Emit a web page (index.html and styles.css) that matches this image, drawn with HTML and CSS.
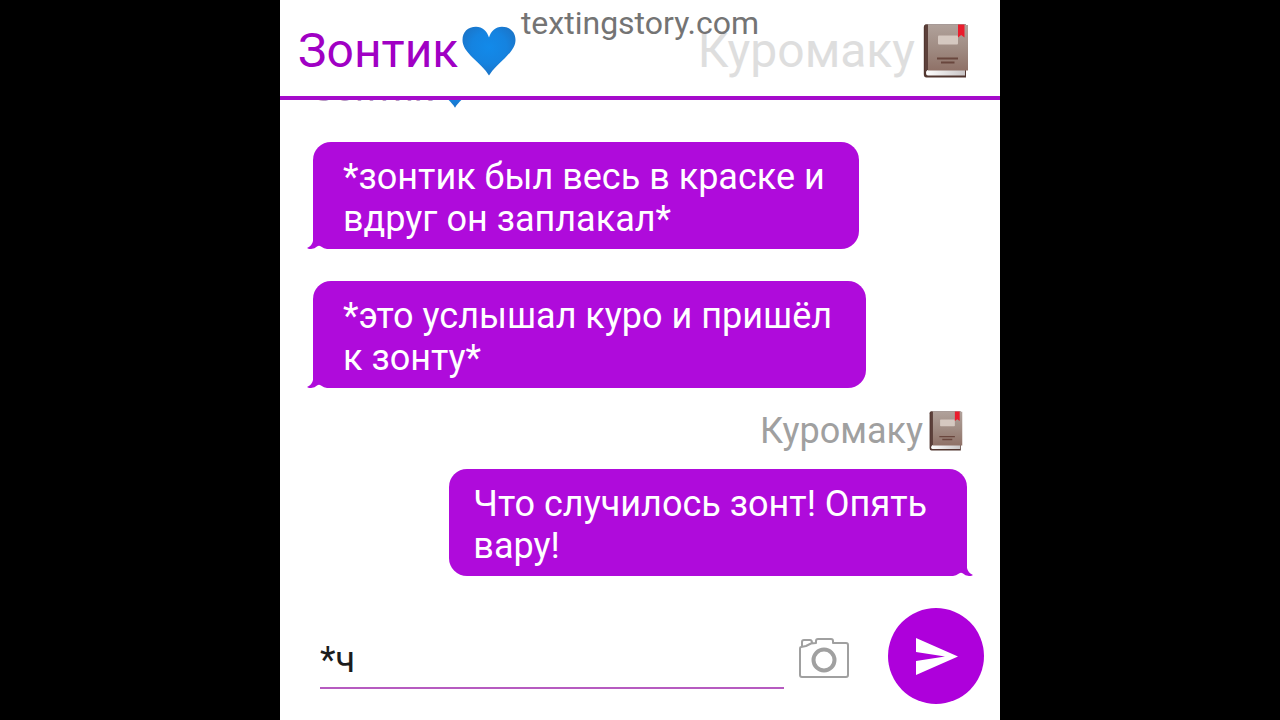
FILE: index.html
```html
<!DOCTYPE html>
<html lang="ru">
<head>
<meta charset="utf-8">
<title>TextingStory</title>
<link rel="stylesheet" href="styles.css">
</head>
<body>
<svg width="0" height="0" class="defs" aria-hidden="true">
  <defs>
    <radialGradient id="heartFill" cx="50%" cy="42%" r="60%">
      <stop offset="0" stop-color="#128aea"/>
      <stop offset="0.55" stop-color="#1583e0"/>
      <stop offset="1" stop-color="#1c72c4"/>
    </radialGradient>
    <linearGradient id="cover" x1="0" y1="0" x2="0" y2="1">
      <stop offset="0" stop-color="#b0a19a"/>
      <stop offset="0.5" stop-color="#a08c83"/>
      <stop offset="1" stop-color="#8f7167"/>
    </linearGradient>
    <linearGradient id="pages" x1="0" y1="0" x2="1" y2="0">
      <stop offset="0" stop-color="#ffffff"/>
      <stop offset="1" stop-color="#c9c5c6"/>
    </linearGradient>
    <symbol id="heart" viewBox="0 0 54 50">
      <path fill="url(#heartFill)" d="M27 49.500C23 43 17 38 11 32C4 25 .5 20 .5 14C.5 6 6 .8 14 .8C20.500 .8 25 5 27 11.500C29 5 33.500 .8 40 .8C48 .8 53.500 6 53.500 14C53.500 20 50 25 43 32C37 38 31 43 27 49.500Z"/>
    </symbol>
    <symbol id="book" viewBox="0 0 46 54">
      <path fill="#513630" d="M2.500 .5H43V53.500H3.500Q.8 53.500 .8 50V3Q.8 .5 2.500 .5Z"/>
      <path fill="url(#pages)" d="M5 46H42V51.500H5Q3 51.500 3 49Q3 46 5 46Z"/>
      <path fill="url(#cover)" d="M5 1H45V46.500H5Z"/>
      <path fill="#5c403a" d="M2.500 .5H5V45.500L2 48V3Z"/>
      <rect x="15" y="11.500" width="20" height="9" rx="1" fill="#d5c8c0"/>
      <path fill="#ea1c2c" d="M35 .5H41.500V13.500L38.200 11L35 13.500Z"/>
      <path stroke="#69463d" stroke-width="1.800" d="M14 34.500H35M18 38.500H31.500"/>
    </symbol>
    <symbol id="tail" viewBox="0 0 20 12">
      <path fill="#af0bdb" d="M6 0V4Q5 9 0 11L2 12H20V0Z"/>
      <path fill="#fff" d="M4 12Q8 11.500 10 9.500Q12 8 14 9.500Q17 11.500 20 12Z"/>
    </symbol>
  </defs>
</svg>
<div class="phone">
  <header class="header">
    <h1 class="person">Зонтик<svg class="heart"><use href="#heart"/></svg></h1>
    <p class="site">textingstory.com</p>
    <h2 class="person person-idle">Куромаку<svg class="book"><use href="#book"/></svg></h2>
  </header>
  <main class="chat">
    <p class="sender sender-left">Зонтик<svg class="heart heart-small"><use href="#heart"/></svg></p>
    <p class="bubble bubble-left">*зонтик был весь в краске и<br>вдруг он заплакал*<svg class="tail"><use href="#tail"/></svg></p>
    <p class="bubble bubble-left">*это услышал куро и пришёл<br>к зонту*<svg class="tail"><use href="#tail"/></svg></p>
    <p class="sender sender-right">Куромаку<svg class="book book-small"><use href="#book"/></svg></p>
    <p class="bubble bubble-right">Что случилось зонт! Опять<br>вару!<svg class="tail"><use href="#tail"/></svg></p>
  </main>
  <form class="composer">
    <input class="message" type="text" value="*ч" aria-label="Сообщение">
    <button class="camera" type="button" aria-label="Камера">
      <svg width="50" height="40" viewBox="0 0 50 40" fill="none" stroke="#a0a0a0" stroke-width="2" stroke-linejoin="round">
        <path d="M2 9Q1 9 1 11V37Q1 39 3 39H47Q49 39 49 37V7Q49 5 47 5H34V3Q34 1 32 1H19Q17 1 17 3V5L12 5.500L7 8L2 9ZM3 8V4Q3 2 5 2H11Q13 2 13 5"/>
        <circle cx="25" cy="22" r="10.500" stroke-width="4"/>
      </svg>
    </button>
    <button class="send" type="submit" aria-label="Отправить">
      <svg width="42" height="37" viewBox="0 0 42 37"><path fill="#fff" d="M0 0L42 18.500L0 37V23L29 18.500L0 14Z"/></svg>
    </button>
  </form>
</div>
</body>
</html>
```
FILE: styles.css
```css
* {
  box-sizing: border-box;
}

body {
  margin: 0;
  background: #000;
  font-family: Roboto, "Noto Sans", sans-serif;
}

h1, h2, p {
  margin: 0;
  font-weight: 400;
}

.defs {
  position: absolute;
}

.phone {
  display: flex;
  flex-direction: column;
  max-width: 720px;
  height: 100vh;
  margin: 0 auto;
  background: #fff;
}

.header {
  position: relative;
  display: flex;
  flex: none;
  align-items: center;
  justify-content: space-between;
  padding: 23px 31px 17px 18px;
  border-bottom: 4px solid #a50bcb;
}

.person {
  display: flex;
  align-items: center;
  gap: 4px;
  font-size: 48px;
  line-height: 56px;
  color: #a000c4;
}

.person-idle {
  gap: 8px;
  color: #dedede;
}

.site {
  position: absolute;
  top: 4px;
  left: 0;
  width: 100%;
  text-align: center;
  font-size: 32px;
  line-height: 38px;
  color: #747474;
}

.heart {
  width: 54px;
  height: 50px;
}

.heart-small {
  width: 40px;
  height: 37px;
}

.book {
  width: 46px;
  height: 54px;
}

.book-small {
  width: 34px;
  height: 40px;
}

.chat {
  display: flex;
  flex: 1;
  flex-direction: column;
  justify-content: flex-end;
  min-height: 0;
  overflow: hidden;
  padding: 0 33px 16px;
}

.sender {
  display: flex;
  align-items: center;
  font-size: 36px;
  line-height: 42px;
}

.sender-left {
  gap: 2px;
  margin-bottom: 32px;
  color: #b99cc4;
}

.sender-right {
  gap: 6px;
  align-self: flex-end;
  margin: -10px 4px 17px 0;
  color: #a0a0a0;
}

.bubble {
  position: relative;
  padding: 14px 34px 9px 30px;
  border-radius: 18px;
  background: #af0bdb;
  font-size: 36px;
  line-height: 42px;
  color: #fff;
}

.bubble-left {
  align-self: flex-start;
  margin-bottom: 32px;
  border-bottom-left-radius: 0;
}

.bubble-right {
  align-self: flex-end;
  padding: 14px 40px 9px 24px;
  border-bottom-right-radius: 0;
}

.tail {
  position: absolute;
  bottom: 0;
  left: -6px;
  width: 20px;
  height: 12px;
}

.bubble-right .tail {
  right: -6px;
  left: auto;
  transform: scaleX(-1);
}

.composer {
  display: flex;
  flex: none;
  align-items: center;
  padding: 16px 16px 16px 40px;
}

.message {
  flex: 1;
  min-width: 0;
  height: 66px;
  padding: 10px 0 0;
  border: 0;
  border-bottom: 2px solid #b65bc0;
  outline: 0;
  background: none;
  font: inherit;
  font-size: 36px;
  color: #1c1c1c;
}

.camera, .send {
  display: grid;
  flex: none;
  place-items: center;
  padding: 0;
  border: 0;
  background: none;
}

.camera {
  width: 80px;
  height: 80px;
  margin: 4px 24px 0 0;
}

.send {
  width: 96px;
  height: 96px;
  padding-left: 2px;
  border-radius: 50%;
  background: #ae00db;
}
```
